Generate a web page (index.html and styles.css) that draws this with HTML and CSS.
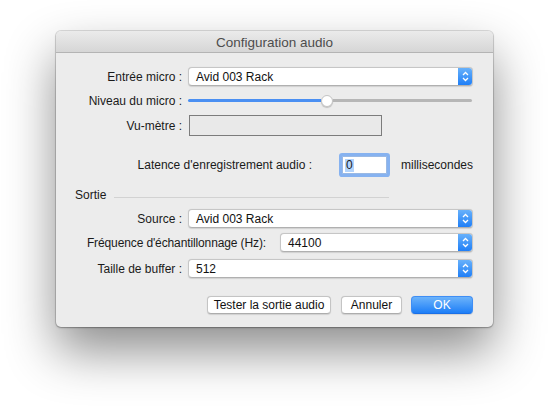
FILE: index.html
```html
<!DOCTYPE html>
<html lang="fr">
<head>
<meta charset="utf-8">
<title>Configuration audio</title>
<link rel="stylesheet" href="styles.css">
</head>
<body>
<div class="window">
  <div class="titlebar">Configuration audio</div>
  <div class="content">
    <div class="row r-first">
      <div class="lbl">Entrée micro :</div>
      <div class="popup wide"><span class="ptext">Avid 003 Rack</span><span class="arrows"><svg width="15" height="19" viewBox="0 0 15 19"><path d="M5 8 L7.5 5.5 L10 8" fill="none" stroke="#fff" stroke-width="1.3"/><path d="M5 11 L7.5 13.5 L10 11" fill="none" stroke="#fff" stroke-width="1.3"/></svg></span></div>
    </div>
    <div class="row r-slider">
      <div class="lbl">Niveau du micro :</div>
      <div class="slider">
        <div class="track-fill"></div>
        <div class="knob"></div>
        <div class="track-rest"></div>
      </div>
    </div>
    <div class="row r-vu">
      <div class="lbl">Vu-mètre :</div>
      <div class="vu"></div>
    </div>
    <div class="row r-lat">
      <div class="lat-lbl">Latence d'enregistrement audio :</div>
      <div class="field"><span class="sel">0</span></div>
      <div class="unit">millisecondes</div>
    </div>
    <div class="row r-sortie">
      <div class="section">Sortie</div>
      <div class="sep"></div>
    </div>
    <div class="row r-src">
      <div class="lbl">Source :</div>
      <div class="popup wide"><span class="ptext">Avid 003 Rack</span><span class="arrows"><svg width="15" height="19" viewBox="0 0 15 19"><path d="M5 8 L7.5 5.5 L10 8" fill="none" stroke="#fff" stroke-width="1.3"/><path d="M5 11 L7.5 13.5 L10 11" fill="none" stroke="#fff" stroke-width="1.3"/></svg></span></div>
    </div>
    <div class="row r-freq">
      <div class="freq-lbl">Fréquence d'échantillonnage (Hz):</div>
      <div class="popup narrow"><span class="ptext">44100</span><span class="arrows"><svg width="15" height="19" viewBox="0 0 15 19"><path d="M5 8 L7.5 5.5 L10 8" fill="none" stroke="#fff" stroke-width="1.3"/><path d="M5 11 L7.5 13.5 L10 11" fill="none" stroke="#fff" stroke-width="1.3"/></svg></span></div>
    </div>
    <div class="row r-buf">
      <div class="lbl">Taille de buffer :</div>
      <div class="popup wide"><span class="ptext">512</span><span class="arrows"><svg width="15" height="19" viewBox="0 0 15 19"><path d="M5 8 L7.5 5.5 L10 8" fill="none" stroke="#fff" stroke-width="1.3"/><path d="M5 11 L7.5 13.5 L10 11" fill="none" stroke="#fff" stroke-width="1.3"/></svg></span></div>
    </div>
    <div class="row r-buttons">
      <button class="btn b-test">Tester la sortie audio</button>
      <button class="btn b-cancel">Annuler</button>
      <button class="btn b-ok">OK</button>
    </div>
  </div>
</div>
</body>
</html>
```

FILE: styles.css
```css
html, body {
  margin: 0;
  padding: 0;
  background: #ffffff;
}
body {
  width: 549px;
  height: 407px;
  overflow: hidden;
  padding: 31px 0 0 56px;
  box-sizing: border-box;
  font-family: "Liberation Sans", Arial, sans-serif;
  font-size: 12px;
  color: #1a1a1a;
}
.window {
  width: 437px;
  height: 296px;
  background: #ececec;
  border-radius: 5px;
  box-shadow: 0 24px 50px rgba(0,0,0,0.45), 0 0 0 1px rgba(0,0,0,0.12), 0 1px 2px rgba(0,0,0,0.25);
  overflow: hidden;
  display: flex;
  flex-direction: column;
}
.titlebar {
  height: 21px;
  line-height: 23px;
  text-align: center;
  font-size: 13.5px;
  color: #4d4d4d;
  background: linear-gradient(#ebebeb, #d6d6d6);
  border-bottom: 1px solid #b4b4b4;
}
.content {
  padding: 14px 20px 0 0;
  display: flex;
  flex-direction: column;
}
.row {
  display: flex;
  align-items: center;
}
.lbl {
  width: 126px;
  text-align: right;
  flex: none;
  margin-right: 6px;
}
.popup {
  height: 19px;
  box-sizing: border-box;
  background: #fff;
  border: 1px solid #c6c6c6;
  border-bottom-color: #b0b0b0;
  border-radius: 4px;
  display: flex;
  align-items: center;
  overflow: hidden;
  box-shadow: 0 0.5px 1px rgba(0,0,0,0.12);
}
.popup.wide { width: 285px; }
.popup.narrow { width: 193px; }
.ptext {
  flex: 1;
  padding-left: 7px;
  color: #111;
}
.arrows {
  width: 15px;
  height: 19px;
  margin-right: -1px;
  background: linear-gradient(#6cb4fb, #1b7cf7);
  display: flex;
  align-items: center;
  justify-content: center;
}
.arrows svg { display: block; }
.r-slider { margin-top: 8px; height: 13px; }
.slider {
  width: 284px;
  height: 13px;
  display: flex;
  align-items: center;
}
.track-fill {
  width: 133px;
  height: 3px;
  background: #4a8ff2;
  border-radius: 2px 0 0 2px;
}
.knob {
  width: 12px;
  height: 12px;
  box-sizing: border-box;
  border-radius: 50%;
  background: #fff;
  border: 1px solid #c4c4c4;
  box-shadow: 0 1px 1px rgba(0,0,0,0.18);
  flex: none;
}
.track-rest {
  flex: 1;
  height: 3px;
  background: #b6b6b6;
  border-radius: 0 2px 2px 0;
}
.r-vu { margin-top: 8px; }
.vu {
  width: 193px;
  height: 21px;
  box-sizing: border-box;
  border: 1px solid #7c7c7c;
  background: #e9e9e9;
  margin-left: 1px;
}
.r-lat {
  margin-top: 20px;
  justify-content: flex-end;
  height: 18px;
}
.lat-lbl { margin-right: 30px; }
.field {
  width: 45px;
  height: 18px;
  box-sizing: border-box;
  background: #fff;
  border: 1px solid #9ab9e4;
  box-shadow: 0 0 0 3px #86b2f0;
  border-radius: 1px;
  padding: 2px 0 0 2px;
  line-height: 13px;
}
.sel {
  background: #b3d4fc;
  display: inline-block;
  padding: 0 1px;
}
.unit { margin-left: 14px; }
.r-sortie {
  margin-top: 14px;
  height: 14px;
  padding-left: 19px;
}
.sep {
  width: 275px;
  height: 1px;
  background: #d2d2d2;
  margin: 4px 0 0 8px;
}
.r-src { margin-top: 7px; }
.r-freq {
  margin-top: 5px;
  justify-content: flex-end;
}
.freq-lbl { margin-right: 14px; letter-spacing: -0.12px; }
.r-buf { margin-top: 7px; }
.r-buttons {
  margin-top: 18px;
  justify-content: flex-end;
}
.btn {
  font-family: "Liberation Sans", Arial, sans-serif;
  font-size: 12px;
  height: 18px;
  padding: 0;
  box-sizing: border-box;
  background: #fff;
  border: 1px solid #c4c4c4;
  border-bottom-color: #adadad;
  border-radius: 4px;
  color: #111;
  line-height: 16px;
  box-shadow: 0 0.5px 1px rgba(0,0,0,0.12);
}
.b-test { width: 124px; }
.b-cancel { width: 61px; margin-left: 10px; }
.b-ok {
  width: 62px;
  margin-left: 9px;
  color: #fff;
  border: 1px solid #3f8ef5;
  border-bottom-color: #1a6fe6;
  background: linear-gradient(#6cb3fa, #1d7ef7);
}
```
